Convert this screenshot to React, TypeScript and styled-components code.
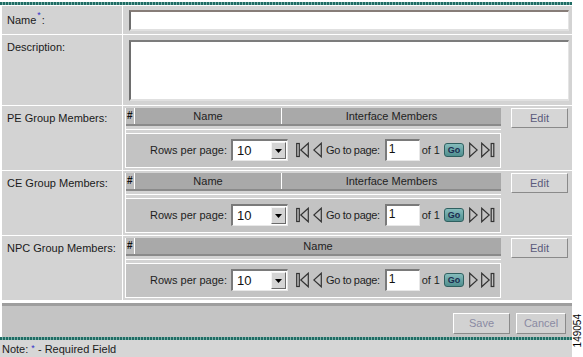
import styled, { createGlobalStyle } from "styled-components";

type Column = { title: string; width?: number };
type Group = { label: string; columns: Column[] };

const groups: Group[] = [
  { label: "PE Group Members:", columns: [{ title: "Name", width: 146 }, { title: "Interface Members" }] },
  { label: "CE Group Members:", columns: [{ title: "Name", width: 146 }, { title: "Interface Members" }] },
  { label: "NPC Group Members:", columns: [{ title: "Name" }] },
];

const GlobalStyle = createGlobalStyle`
  html, body {
    margin: 0;
    padding: 0;
    background: #fff;
  }
  body {
    font-family: "Liberation Sans", Arial, sans-serif;
    font-size: 11px;
    color: #1c1c1c;
  }
`;

const FirstIcon = () => (
  <svg width="13" height="16" viewBox="0 0 13 16">
    <rect x="0.7" y="1.5" width="2.6" height="13" fill="none" stroke="#333" strokeWidth="1.2" />
    <polygon points="12.3,1.2 4.8,8 12.3,14.8" fill="none" stroke="#333" strokeWidth="1.2" />
  </svg>
);

const PrevIcon = () => (
  <svg width="9" height="16" viewBox="0 0 9 16">
    <polygon points="8.3,1.2 0.8,8 8.3,14.8" fill="none" stroke="#333" strokeWidth="1.2" />
  </svg>
);

const NextIcon = () => (
  <svg width="9" height="16" viewBox="0 0 9 16">
    <polygon points="0.7,1.2 8.2,8 0.7,14.8" fill="none" stroke="#333" strokeWidth="1.2" />
  </svg>
);

const LastIcon = () => (
  <svg width="14" height="16" viewBox="0 0 14 16">
    <polygon points="0.7,1.2 8.2,8 0.7,14.8" fill="none" stroke="#333" strokeWidth="1.2" />
    <rect x="10.2" y="1.5" width="2.6" height="13" fill="none" stroke="#333" strokeWidth="1.2" />
  </svg>
);

const DownArrow = () => (
  <svg width="7" height="4" viewBox="0 0 7 4">
    <polygon points="0,0 7,0 3.5,4" fill="#000" />
  </svg>
);

const App = () => {
  return (
    <>
      <GlobalStyle />
      <Page>
        <Main>
          <TealBar />
          <FormTable>
            <LabelCell $top={8}>
              Name<Req>*</Req>:
            </LabelCell>
            <FieldCell>
              <NameInput readOnly value="" />
            </FieldCell>

            <LabelCell $top={6}>Description:</LabelCell>
            <FieldCell>
              <DescArea readOnly value="" />
            </FieldCell>

            {groups.map((g) => (
              <GroupRow key={g.label} group={g} />
            ))}
          </FormTable>
          <BottomRule />
          <ButtonBar>
            <BarButton $width={57}>Save</BarButton>
            <BarButton $width={50}>Cancel</BarButton>
          </ButtonBar>
          <TealBar />
          <NoteRow>
            Note: <NoteReq>*</NoteReq> - Required Field
          </NoteRow>
        </Main>
        <Side>
          <FigNumber>149054</FigNumber>
        </Side>
      </Page>
    </>
  );
};

const GroupRow = ({ group }: { group: Group }) => (
  <>
    <LabelCell $top={6}>{group.label}</LabelCell>
    <GroupCell>
      <InnerBox>
        <HeaderRow>
          <HashCell>#</HashCell>
          {group.columns.map((c) => (
            <HeadCell key={c.title} $width={c.width}>
              {c.title}
            </HeadCell>
          ))}
        </HeaderRow>
        <WhiteRule />
        <Pager>
          <PagerText>Rows per page:</PagerText>
          <Select>
            <SelectValue>10</SelectValue>
            <SelectArrow>
              <DownArrow />
            </SelectArrow>
          </Select>
          <NavIcon $ml={8}>
            <FirstIcon />
          </NavIcon>
          <NavIcon $ml={4}>
            <PrevIcon />
          </NavIcon>
          <PagerText $ml={4} $tight>
            Go to page:
          </PagerText>
          <PageInput $ml={5}>1</PageInput>
          <PagerText $ml={2}>of 1</PagerText>
          <GoButton>Go</GoButton>
          <NavIcon $ml={5}>
            <NextIcon />
          </NavIcon>
          <NavIcon $ml={3}>
            <LastIcon />
          </NavIcon>
        </Pager>
      </InnerBox>
      <EditButton>Edit</EditButton>
    </GroupCell>
  </>
);

const Page = styled.div`
  display: flex;
  width: 583px;
  height: 357px;
  overflow: hidden;
`;

const Main = styled.div`
  width: 572px;
  display: flex;
  flex-direction: column;
  padding-top: 2px;
`;

const TealBar = styled.div`
  height: 3px;
  background: repeating-linear-gradient(90deg, #1f6c64 0 2px, #79aea6 2px 3px);
`;

const FormTable = styled.div`
  display: grid;
  grid-template-columns: 120px 449px;
  grid-template-rows: 28px 70px 64px 64px 64px;
  gap: 1px;
  padding: 1px 0 0 2px;
  background: #fff;
`;

const LabelCell = styled.div<{ $top: number }>`
  background: #d3d3d3;
  padding: ${(p) => p.$top}px 0 0 5px;
  line-height: 13px;
  color: #1a1a1a;
`;

const Req = styled.span`
  color: #3434c8;
  font-size: 9px;
  position: relative;
  top: -6px;
  margin: 0 1px;
`;

const FieldCell = styled.div`
  background: #d3d3d3;
  padding: 4px 4px 0 6px;
`;

const NameInput = styled.input`
  display: block;
  box-sizing: border-box;
  width: 440px;
  height: 21px;
  margin: 0;
  background: #fff;
  border-style: solid;
  border-width: 2px 1px 2px 2px;
  border-color: #877d78 #e4e4e4 #e0e0e0 #6e6e6e;
  outline: none;
`;

const DescArea = styled.textarea`
  display: block;
  box-sizing: border-box;
  width: 440px;
  height: 61px;
  margin: 1px 0 0;
  resize: none;
  background: #fff;
  border-style: solid;
  border-width: 2px 1px 2px 2px;
  border-color: #7c7c7c #e4e4e4 #e0e0e0 #6e6e6e;
  outline: none;
`;

const GroupCell = styled.div`
  background: #d3d3d3;
  display: flex;
  align-items: flex-start;
  padding: 2px 4px 0 2px;
`;

const InnerBox = styled.div`
  width: 375px;
  border-left: 1px solid #fff;
  display: flex;
  flex-direction: column;
`;

const HeaderRow = styled.div`
  display: flex;
  height: 16px;
  border-bottom: 2px solid #8a8a8a;
  background: #a9a9a9;
  line-height: 16px;
  color: #222;
`;

const HashCell = styled.div`
  flex: 0 0 8px;
  background: #bdbdbd;
  padding-left: 1px;
  box-sizing: border-box;
  font-size: 10px;
  font-weight: bold;
  color: #111;
`;

const HeadCell = styled.div<{ $width?: number }>`
  flex: ${(p) => (p.$width ? `0 0 ${p.$width}px` : "1")};
  border-left: 1px solid #fff;
  text-align: center;
`;

const WhiteRule = styled.div`
  height: 1px;
  margin: 3px 0;
  background: #fff;
`;

const Pager = styled.div`
  height: 33px;
  border-top: 1px solid #fff;
  border-right: 1px solid #fff;
  border-bottom: 1px solid #fff;
  background: #c3c3c3;
  display: flex;
  align-items: center;
  justify-content: flex-end;
  padding-right: 5px;
`;

const PagerText = styled.span<{ $ml?: number; $tight?: boolean }>`
  margin-left: ${(p) => p.$ml ?? 0}px;
  letter-spacing: ${(p) => (p.$tight ? "-0.35px" : "0")};
  color: #1e1e1e;
  white-space: nowrap;
`;

const Select = styled.div`
  box-sizing: border-box;
  width: 57px;
  height: 22px;
  margin-left: 4px;
  display: flex;
  align-items: center;
  background: #fff;
  border-style: solid;
  border-width: 2px 1px 1px 2px;
  border-color: #7a7a7a #e8e8e8 #e8e8e8 #7a7a7a;
`;

const SelectValue = styled.span`
  flex: 1;
  padding-left: 4px;
  font-size: 13px;
  color: #111;
`;

const SelectArrow = styled.div`
  box-sizing: border-box;
  width: 15px;
  height: 17px;
  margin-right: 1px;
  display: flex;
  align-items: center;
  justify-content: center;
  background: #d4d4d4;
  border-style: solid;
  border-width: 1px;
  border-color: #f4f4f4 #6a6a6a #6a6a6a #f4f4f4;
`;

const NavIcon = styled.span<{ $ml: number }>`
  display: flex;
  margin-left: ${(p) => p.$ml}px;
`;

const PageInput = styled.div<{ $ml: number }>`
  box-sizing: border-box;
  width: 35px;
  height: 22px;
  margin-left: ${(p) => p.$ml}px;
  padding-left: 2px;
  background: #fff;
  border-style: solid;
  border-width: 2px 1px 1px 2px;
  border-color: #7a7a7a #e8e8e8 #e8e8e8 #7a7a7a;
  font-size: 12px;
  line-height: 17px;
  color: #111;
`;

const GoButton = styled.span`
  box-sizing: border-box;
  width: 20px;
  height: 14px;
  margin-left: 4px;
  display: flex;
  align-items: center;
  justify-content: center;
  background: linear-gradient(#86bcbc, #4f8e8e);
  border: 1px solid #2f6060;
  border-radius: 3px;
  font-size: 9px;
  font-weight: bold;
  color: #1a2c50;
`;

const EditButton = styled.div`
  box-sizing: border-box;
  width: 57px;
  height: 20px;
  margin-left: auto;
  display: flex;
  align-items: center;
  justify-content: center;
  background: #d6d6d6;
  border-style: solid;
  border-width: 1px;
  border-color: #fff #8a8a8a #8a8a8a #fff;
  color: #5a5a7c;
`;

const BottomRule = styled.div`
  height: 3px;
  margin: 3px 0 0 2px;
  background: #9e9e9e;
`;

const ButtonBar = styled.div`
  height: 32px;
  margin-left: 2px;
  box-sizing: border-box;
  padding: 7px 6px 0 0;
  background: #c4c4c4;
  display: flex;
  align-items: flex-start;
  justify-content: flex-end;
  gap: 6px;
`;

const BarButton = styled.div<{ $width: number }>`
  box-sizing: border-box;
  width: ${(p) => p.$width}px;
  height: 21px;
  display: flex;
  align-items: center;
  justify-content: center;
  background: #d2d2d2;
  border-style: solid;
  border-width: 1px;
  border-color: #fff #8a8a8a #8a8a8a #fff;
  color: #8a8aa2;
`;

const NoteRow = styled.div`
  flex: 1;
  background: #d6d6d6;
  padding: 3px 0 0 2px;
  line-height: 13px;
  color: #1a1a1a;
`;

const NoteReq = styled.span`
  color: #3434c8;
  font-size: 9px;
  position: relative;
  top: -2px;
`;

const Side = styled.div`
  flex: 1;
  display: flex;
  flex-direction: column;
  justify-content: flex-end;
  align-items: center;
  padding-bottom: 10px;
`;

const FigNumber = styled.span`
  writing-mode: vertical-rl;
  transform: rotate(180deg);
  font-size: 10px;
  color: #000;
`;

export default App;
